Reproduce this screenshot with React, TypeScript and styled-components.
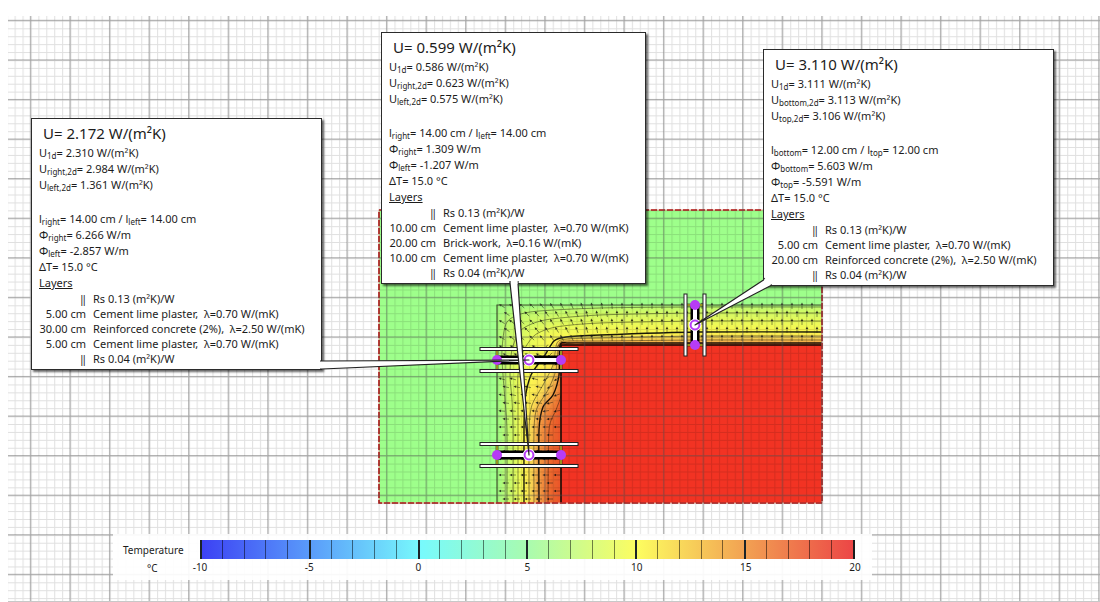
import React from "react";
import styled, { createGlobalStyle } from "styled-components";

const GlobalStyle = createGlobalStyle`
  * { box-sizing: border-box; }
  body {
    margin: 0;
    background: #fff;
    color: #1c1c1c;
    font-family: "Noto Sans", "Open Sans", sans-serif;
  }
`;

const Board = styled.main`
  position: relative;
  min-height: 100vh;
  display: flex;
  flex-direction: column;
  justify-content: flex-end;
  overflow: hidden;
  padding: 0 228px 22px 113px;
`;

const Drawing = styled.svg`
  position: absolute;
  inset: 0;
  width: 100%;
  height: 100%;
  display: block;
  pointer-events: none;
`;

const CalloutBox = styled.section<{ $x: number; $y: number; $width: number }>`
  position: absolute;
  left: ${(p) => p.$x}px;
  top: ${(p) => p.$y}px;
  width: ${(p) => p.$width}px;
  padding: 2px 5px 3px 7px;
  border: 1px solid #2b2b2b;
  background: #fff;
  box-shadow: 2px 2px 2px rgba(0, 0, 0, 0.6);
  font-size: 11px;
  white-space: nowrap;
`;

const Title = styled.h2`
  margin: 0;
  padding-left: 4px;
  font-size: 15px;
  font-weight: 400;
  line-height: 24px;
`;

const Value = styled.p<{ $spaced?: boolean }>`
  margin: ${(p) => (p.$spaced ? "18px" : "0")} 0 0;
  height: 16px;
  line-height: 16px;
`;

const Sub = styled.sub`
  font-size: 8px;
  line-height: 0;
  vertical-align: -2px;
`;

const LayerHeading = styled.h3`
  margin: 0;
  font-size: 11px;
  font-weight: 400;
  line-height: 16px;
  text-decoration: underline;
`;

const LayerTable = styled.table`
  border-collapse: collapse;
`;

const Thickness = styled.td`
  width: 47px;
  padding: 0;
  line-height: 15px;
  text-align: right;
`;

const Material = styled.td`
  padding: 0 0 0 7px;
  line-height: 15px;
  white-space: pre;
`;

const Legend = styled.section`
  position: relative;
  display: flex;
  padding: 6px 17px 3px 0;
  background: rgba(255, 255, 255, 0.92);
  font-size: 10px;
`;

const LegendLabels = styled.div`
  flex: 0 0 87px;
  display: flex;
  flex-direction: column;
  line-height: 17px;
  padding-left: 10px;
`;

const LegendName = styled.span`
  line-height: 20px;
`;

const LegendUnit = styled.span`
  padding-left: 24px;
`;

const Scale = styled.div`
  flex: 1;
`;

const Bar = styled.div`
  display: grid;
  grid-template-columns: repeat(30, 1fr);
  height: 19px;
  background: linear-gradient(
    to right,
    #3c40f4 0%,
    #5a9cfa 17%,
    #78fafc 34%,
    #a8fbb0 50%,
    #fdfd60 67%,
    #f2a453 83%,
    #ec4646 100%
  );
  border-right: 2px solid #1c1c1c;
`;

const Tick = styled.span<{ $major: boolean }>`
  border-left: ${(p) => (p.$major ? "2px solid #1c2428" : "1px solid rgba(0, 0, 0, 0.5)")};
`;

const ScaleNumbers = styled.div`
  display: flex;
  justify-content: space-between;
  line-height: 17px;
`;

const ScaleNumber = styled.span`
  width: 0;
  display: flex;
  justify-content: center;
`;

type Layer = { size: string; text: string };
type CalloutData = {
  x: number;
  y: number;
  width: number;
  u: string;
  u1d: string;
  a: string;
  b: string;
  ua: string;
  ub: string;
  length: string;
  phiA: string;
  phiB: string;
  layers: Layer[];
};

const plaster = "Cement lime plaster,  λ=0.70 W/(mK)";
const concrete = "Reinforced concrete (2%),  λ=2.50 W/(mK)";
const inner: Layer = { size: "‖", text: "Rs 0.13 (m²K)/W" };
const outer: Layer = { size: "‖", text: "Rs 0.04 (m²K)/W" };

const callouts: CalloutData[] = [
  {
    x: 31, y: 118, width: 291, u: "2.172", u1d: "2.310", a: "right", b: "left",
    ua: "2.984", ub: "1.361", length: "14.00", phiA: "6.266", phiB: "-2.857",
    layers: [inner, { size: "5.00 cm", text: plaster }, { size: "30.00 cm", text: concrete }, { size: "5.00 cm", text: plaster }, outer],
  },
  {
    x: 381, y: 32, width: 265, u: "0.599", u1d: "0.586", a: "right", b: "left",
    ua: "0.623", ub: "0.575", length: "14.00", phiA: "1.309", phiB: "-1.207",
    layers: [inner, { size: "10.00 cm", text: plaster }, { size: "20.00 cm", text: "Brick-work,  λ=0.16 W/(mK)" }, { size: "10.00 cm", text: plaster }, outer],
  },
  {
    x: 763, y: 49, width: 291, u: "3.110", u1d: "3.111", a: "bottom", b: "top",
    ua: "3.113", ub: "3.106", length: "12.00", phiA: "5.603", phiB: "-5.591",
    layers: [inner, { size: "5.00 cm", text: plaster }, { size: "20.00 cm", text: concrete }, outer],
  },
];

function Callout({ data: d }: { data: CalloutData }) {
  return (
    <CalloutBox $x={d.x} $y={d.y} $width={d.width}>
      <Title>U= {d.u} W/(m²K)</Title>
      <Value>U<Sub>1d</Sub>= {d.u1d} W/(m²K)</Value>
      <Value>U<Sub>{d.a},2d</Sub>= {d.ua} W/(m²K)</Value>
      <Value>U<Sub>{d.b},2d</Sub>= {d.ub} W/(m²K)</Value>
      <Value $spaced>
        l<Sub>{d.a}</Sub>= {d.length} cm / l<Sub>{d.b}</Sub>= {d.length} cm
      </Value>
      <Value>Φ<Sub>{d.a}</Sub>= {d.phiA} W/m</Value>
      <Value>Φ<Sub>{d.b}</Sub>= {d.phiB} W/m</Value>
      <Value>ΔT= 15.0 °C</Value>
      <LayerHeading>Layers</LayerHeading>
      <LayerTable>
        <tbody>
          {d.layers.map((l, i) => (
            <tr key={i}>
              <Thickness>{l.size}</Thickness>
              <Material>{l.text}</Material>
            </tr>
          ))}
        </tbody>
      </LayerTable>
    </CalloutBox>
  );
}

type Point = [number, number];
type Isotherm = { color: [number, number, number]; points: Point[] };

// Isotherms run from the foot of the wall, round the corner, to the slab edge.
const isotherms: Isotherm[] = [
  { color: [162, 251, 130], points: [[497, 503], [497, 430], [497, 400], [497, 375], [497, 350], [497, 307], [530, 305], [600, 305], [700, 305], [822, 305]] },
  { color: [194, 250, 110], points: [[507, 503], [507, 430], [505, 400], [503, 375], [502, 350], [507, 322], [530, 312], [600, 308], [700, 307], [822, 307]] },
  { color: [214, 249, 98], points: [[513, 503], [513, 430], [512, 400], [510, 375], [512, 350], [521, 330], [545, 320], [600, 315], [700, 313], [822, 313]] },
  { color: [234, 250, 88], points: [[518, 503], [518, 430], [518, 400], [518, 375], [523, 352], [535, 335], [556, 327], [600, 323], [700, 321], [822, 321]] },
  { color: [252, 246, 80], points: [[524, 503], [524, 430], [525, 400], [531, 375], [545, 355], [554, 341], [566, 337], [600, 335], [700, 332], [822, 332]] },
  { color: [250, 222, 84], points: [[529, 503], [529, 430], [532, 405], [543, 385], [553, 365], [557, 343], [567, 339], [600, 338], [700, 336], [822, 336]] },
  { color: [246, 192, 80], points: [[534, 503], [534, 430], [537, 408], [548, 390], [556, 370], [559, 344], [568, 341], [600, 341], [700, 340], [822, 340]] },
  { color: [242, 152, 66], points: [[539, 503], [539, 430], [543, 407], [553, 395], [559, 375], [560, 345], [569, 343], [600, 343], [700, 343], [822, 343]] },
  { color: [236, 106, 46], points: [[548, 503], [549, 430], [556, 410], [561, 395], [561, 375], [561, 345], [569, 345], [600, 345], [700, 345], [822, 345]] },
  { color: [234, 80, 40], points: [[561, 503], [561, 430], [561, 410], [561, 395], [561, 375], [561, 345], [569, 345], [600, 345], [700, 345], [822, 345]] },
];

function smooth(pts: Point[]) {
  let d = `M${pts[0][0]} ${pts[0][1]}`;
  for (let i = 0; i < pts.length - 1; i++) {
    const p0 = pts[Math.max(0, i - 1)];
    const p1 = pts[i];
    const p2 = pts[i + 1];
    const p3 = pts[Math.min(pts.length - 1, i + 2)];
    d += `C${p1[0] + (p2[0] - p0[0]) / 8} ${p1[1] + (p2[1] - p0[1]) / 8} ${p2[0] - (p3[0] - p1[0]) / 8} ${p2[1] - (p3[1] - p1[1]) / 8} ${p2[0]} ${p2[1]}`;
  }
  return d;
}

const STEPS = 4;
const bands = isotherms.slice(0, -1).flatMap((iso, i) =>
  Array.from({ length: STEPS }, (_, s) => {
    const t = s / STEPS;
    const next = isotherms[i + 1];
    const mix = (a: number, b: number) => a + (b - a) * t;
    return {
      level: i + t,
      color: `rgb(${iso.color.map((c, k) => Math.round(mix(c, next.color[k]))).join(",")})`,
      d: smooth(iso.points.map((p, k) => [mix(p[0], next.points[k][0]), mix(p[1], next.points[k][1])] as Point)),
    };
  })
);

// Heat-flow arrows: upwards through the slab, leftwards through the wall, fanning out at the corner.
const arrows: { x: number; y: number; angle: number }[] = [];
for (let r = 0; r < 5; r++) {
  for (let x = 502 + (r % 2) * 5; x < 820; x += 10) {
    const y = 306 + r * 8;
    if (x < 561 && y > 338) continue;
    const lean = x > 620 ? 0 : Math.min(62, (620 - x) / 2);
    arrows.push({ x, y, angle: -90 - lean });
  }
}
for (let r = 0; r < 20; r++) {
  const y = 347 + r * 8;
  for (let x = 502 + (r % 2) * 4; x < 560; x += 11) {
    const turn = y > 425 ? 0 : (425 - y) / 3;
    arrows.push({ x, y, angle: x > 540 && y < 425 ? 180 - turn * 2 : 180 + turn });
  }
}

const slabRegion = "M497 305H822V345H561V503H497Z";

function HeatMap() {
  return (
    <g>
      <rect x="379" y="210" width="443" height="293" fill="#9eff8b" />
      <rect x="561" y="345" width="261" height="158" fill="#f23323" />
      <g clipPath="url(#section)">
        {bands.map((b) => (
          <path key={b.level} d={`${b.d}V503Z`} fill={b.color} />
        ))}
        {bands
          .filter((b) => b.level > 0 && b.level % 1 === 0)
          .map((b) => {
            const major = b.level === 4 || b.level === 7;
            return (
              <path key={b.level} d={b.d} fill="none" stroke="#000" strokeWidth={major ? 1.4 : 0.7} strokeOpacity={major ? 0.9 : 0.6} />
            );
          })}
      </g>
      <g stroke="#111" strokeWidth="0.7" strokeOpacity="0.65" fill="#111" fillOpacity="0.8">
        {arrows.map((a, i) => (
          <g key={i} transform={`translate(${a.x} ${a.y}) rotate(${a.angle})`}>
            <path d="M-3 0H2" />
            <path d="M3.600 0L1 -1.300V1.300Z" stroke="none" />
          </g>
        ))}
      </g>
      <path d="M497 503V305H822" fill="none" stroke="#465a30" strokeWidth="1.2" />
      <path d="M561 503V345H822" fill="none" stroke="#1c0a04" strokeWidth="1.6" />
      <rect x="379" y="210" width="443" height="293" fill="none" stroke="#e8a090" strokeWidth="1" />
      <rect x="379" y="210" width="443" height="293" fill="none" stroke="#b01c1c" strokeWidth="1.6" strokeDasharray="6 2" />
    </g>
  );
}

function Cut({ cx, cy, half, reach, rotate = 0 }: { cx: number; cy: number; half: number; reach: number; rotate?: number }) {
  const gap = rotate ? 9.5 : 11;
  return (
    <g transform={`translate(${cx} ${cy}) rotate(${rotate})`}>
      {[-half, half].map((x) => (
        <g key={x}>
          <path d={`M${x} ${-gap}V${gap}`} stroke="#111" strokeWidth="2.6" />
          <path d={`M${x} ${-gap}V${gap}`} stroke="#f4ec2c" strokeWidth="1.2" />
        </g>
      ))}
      <rect x={-half} y="-4.5" width={half * 2} height="9" fill="#000" />
      <rect x={-half} y="-2" width={half * 2} height="4" fill="#fff" />
      {[-gap, gap].map((y) => (
        <rect key={y} x={-reach} y={y - 1.5} width={reach * 2} height="3" fill="#fff" stroke="#222" strokeWidth="1" />
      ))}
      {[-half, half].map((x) => (
        <circle key={x} cx={x} cy="0" r="5" fill="#b63cf6" />
      ))}
    </g>
  );
}

function Ring({ cx, cy }: { cx: number; cy: number }) {
  return (
    <g>
      <circle cx={cx} cy={cy} r="6.2" fill="#fff" />
      <circle cx={cx} cy={cy} r="4.4" fill="#fff" stroke="#b63cf6" strokeWidth="2" />
    </g>
  );
}

function Diagram() {
  return (
    <Drawing role="img" aria-label="Temperature field of the wall and slab corner">
      <defs>
        <clipPath id="section">
          <path d={slabRegion} />
        </clipPath>
        <pattern id="minor" x="30.4" y="20.4" width="7.914" height="7.914" patternUnits="userSpaceOnUse">
          <path d="M0.6 0V8M0 0.6H8" stroke="#000" strokeOpacity="0.12" strokeWidth="1" />
        </pattern>
        <pattern id="major" x="29.8" y="19.8" width="39.57" height="39.57" patternUnits="userSpaceOnUse">
          <path d="M0.7 0V40M0 0.7H40" stroke="#555" strokeOpacity="0.44" strokeWidth="1.2" />
        </pattern>
      </defs>
      <HeatMap />
      <svg x="8" y="16" width="100%" height="100%" overflow="hidden">
        <g transform="translate(-8 -16)">
          <rect x="8" y="16" width="100%" height="100%" fill="url(#minor)" />
          <rect x="8" y="16" width="100%" height="100%" fill="url(#major)" />
        </g>
      </svg>
      <Cut cx={529} cy={360} half={32} reach={49} />
      <Cut cx={529} cy={455} half={32} reach={49} />
      <Cut cx={695} cy={325} half={20} reach={31} rotate={90} />
      <Ring cx={529} cy={360} />
      <Ring cx={529} cy={455} />
      <Ring cx={695} cy={325} />
    </Drawing>
  );
}

function Pointers() {
  return (
    <Drawing aria-hidden="true">
      <g fill="#fff" stroke="#222" strokeWidth="1.2" strokeLinejoin="round">
        <path d="M320 361H322L529 360L322 369H320" />
        <path d="M510 281V283L529 455L518 283V281" />
        <path d="M765 278L763.5 280L695 325L771 285.5V284" />
      </g>
      <path d="M318 362H322V368H318ZM511 279H517.5V284H511ZM765 278L771 281V285L764 281Z" fill="#fff" />
    </Drawing>
  );
}

const BoardEdge = styled.hr`
  position: absolute;
  left: 8px;
  right: 0;
  bottom: 0;
  margin: 0;
  border: 0;
  border-top: 1px solid #c8c8c8;
`;

export default function App() {
  return (
    <>
      <GlobalStyle />
      <Board>
        <Diagram />
        <BoardEdge />
        {callouts.map((c) => (
          <Callout key={c.u} data={c} />
        ))}
        <Pointers />
        <Legend>
          <LegendLabels>
            <LegendName>Temperature</LegendName>
            <LegendUnit>°C</LegendUnit>
          </LegendLabels>
          <Scale>
            <Bar>
              {Array.from({ length: 30 }, (_, i) => (
                <Tick key={i} $major={i % 5 === 0} />
              ))}
            </Bar>
            <ScaleNumbers>
              {[-10, -5, 0, 5, 10, 15, 20].map((n) => (
                <ScaleNumber key={n}>{n}</ScaleNumber>
              ))}
            </ScaleNumbers>
          </Scale>
        </Legend>
      </Board>
    </>
  );
}
